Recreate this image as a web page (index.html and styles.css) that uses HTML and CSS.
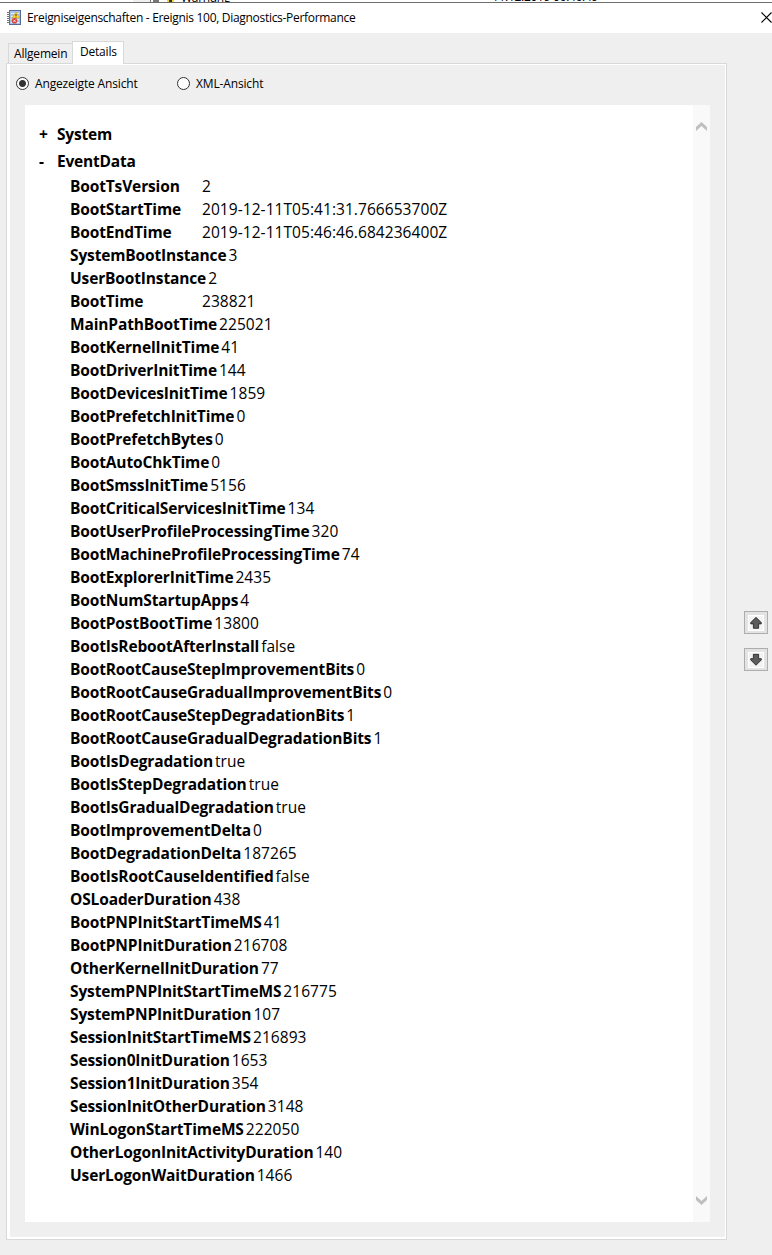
FILE: index.html
```
<!DOCTYPE html>
<html lang="de">
<head>
  <meta charset="UTF-8" />
  <title>Ereigniseigenschaften</title>
  <link rel="stylesheet" href="styles.css">
</head>
<body>

<div class="behind">
  <span class="behind-cell"></span>
  <span class="behind-bar"></span>
  <span class="behind-icon"></span>
  <span class="behind-level">Warnung</span>
  <span class="behind-date">11.12.2019 06:46:49</span>
</div>

<div class="window">
  <header class="titlebar">
    <svg class="app-icon" width="15" height="16" viewBox="0 0 15 16">
      <rect x="2.5" y="0.5" width="11" height="14" fill="#a9c4e6" stroke="#56699b"/>
      <path d="M4 3.5h8M4 6.5h8M4 9.5h8M4 12.5h8" stroke="#e4eefa"/>
      <path d="M0 2.5h3M0 4.5h3M0 6.5h3M0 8.5h3M0 10.5h3M0 12.5h3" stroke="#777"/>
      <path d="M9 2l3.8 6H5.2z" fill="#ffd92e" stroke="#c79a16" stroke-width=".6"/>
      <path d="M9 4v2M9 6.6v.8" stroke="#333"/>
      <circle cx="7.5" cy="10.8" r="2.8" fill="#d4453e"/>
      <path d="M6.4 9.7l2.2 2.2M8.6 9.7l-2.2 2.2" stroke="#fff" stroke-width=".8"/>
    </svg>
    <h1>Ereigniseigenschaften - Ereignis 100, Diagnostics-Performance</h1>
    <svg class="close" width="11" height="11" viewBox="0 0 11 11">
      <path d="M.5 .5l10 10M10.5 .5l-10 10" stroke="#000" stroke-width="1.1"/>
    </svg>
  </header>

  <div class="dialog">
    <main>
      <nav class="tabs">
        <a class="tab">Allgemein</a>
        <a class="tab active">Details</a>
      </nav>
      <section class="panel">
        <div class="views">
          <label class="view"><span class="radio checked"></span>Angezeigte Ansicht</label>
          <label class="view"><span class="radio"></span>XML-Ansicht</label>
        </div>
        <div class="content">
          <div class="tree">
            <h2><span class="sign">+</span>System</h2>
            <h2><span class="sign">-</span>EventData</h2>
            <dl class="data">
              <div><dt>BootTsVersion</dt><dd>2</dd></div>
              <div><dt>BootStartTime</dt><dd>2019-12-11T05:41:31.766653700Z</dd></div>
              <div><dt>BootEndTime</dt><dd>2019-12-11T05:46:46.684236400Z</dd></div>
              <div><dt>SystemBootInstance</dt><dd>3</dd></div>
              <div><dt>UserBootInstance</dt><dd>2</dd></div>
              <div><dt>BootTime</dt><dd>238821</dd></div>
              <div><dt>MainPathBootTime</dt><dd>225021</dd></div>
              <div><dt>BootKernelInitTime</dt><dd>41</dd></div>
              <div><dt>BootDriverInitTime</dt><dd>144</dd></div>
              <div><dt>BootDevicesInitTime</dt><dd>1859</dd></div>
              <div><dt>BootPrefetchInitTime</dt><dd>0</dd></div>
              <div><dt>BootPrefetchBytes</dt><dd>0</dd></div>
              <div><dt>BootAutoChkTime</dt><dd>0</dd></div>
              <div><dt>BootSmssInitTime</dt><dd>5156</dd></div>
              <div><dt>BootCriticalServicesInitTime</dt><dd>134</dd></div>
              <div><dt>BootUserProfileProcessingTime</dt><dd>320</dd></div>
              <div><dt>BootMachineProfileProcessingTime</dt><dd>74</dd></div>
              <div><dt>BootExplorerInitTime</dt><dd>2435</dd></div>
              <div><dt>BootNumStartupApps</dt><dd>4</dd></div>
              <div><dt>BootPostBootTime</dt><dd>13800</dd></div>
              <div><dt>BootIsRebootAfterInstall</dt><dd>false</dd></div>
              <div><dt>BootRootCauseStepImprovementBits</dt><dd>0</dd></div>
              <div><dt>BootRootCauseGradualImprovementBits</dt><dd>0</dd></div>
              <div><dt>BootRootCauseStepDegradationBits</dt><dd>1</dd></div>
              <div><dt>BootRootCauseGradualDegradationBits</dt><dd>1</dd></div>
              <div><dt>BootIsDegradation</dt><dd>true</dd></div>
              <div><dt>BootIsStepDegradation</dt><dd>true</dd></div>
              <div><dt>BootIsGradualDegradation</dt><dd>true</dd></div>
              <div><dt>BootImprovementDelta</dt><dd>0</dd></div>
              <div><dt>BootDegradationDelta</dt><dd>187265</dd></div>
              <div><dt>BootIsRootCauseIdentified</dt><dd>false</dd></div>
              <div><dt>OSLoaderDuration</dt><dd>438</dd></div>
              <div><dt>BootPNPInitStartTimeMS</dt><dd>41</dd></div>
              <div><dt>BootPNPInitDuration</dt><dd>216708</dd></div>
              <div><dt>OtherKernelInitDuration</dt><dd>77</dd></div>
              <div><dt>SystemPNPInitStartTimeMS</dt><dd>216775</dd></div>
              <div><dt>SystemPNPInitDuration</dt><dd>107</dd></div>
              <div><dt>SessionInitStartTimeMS</dt><dd>216893</dd></div>
              <div><dt>Session0InitDuration</dt><dd>1653</dd></div>
              <div><dt>Session1InitDuration</dt><dd>354</dd></div>
              <div><dt>SessionInitOtherDuration</dt><dd>3148</dd></div>
              <div><dt>WinLogonStartTimeMS</dt><dd>222050</dd></div>
              <div><dt>OtherLogonInitActivityDuration</dt><dd>140</dd></div>
              <div><dt>UserLogonWaitDuration</dt><dd>1466</dd></div>
            </dl>
          </div>
          <div class="scrollbar">
            <svg width="11" height="9" viewBox="0 0 11 9"><path d="M0 5L5.5 0 11 5v4L5.5 4 0 9z" fill="#bfbfbf"/></svg>
            <svg width="11" height="9" viewBox="0 0 11 9"><path d="M0 4l5.5 5L11 4V0L5.5 5 0 0z" fill="#bfbfbf"/></svg>
          </div>
        </div>
      </section>
    </main>
    <aside class="arrows">
      <button class="arrow">
        <svg width="16" height="16" viewBox="0 0 16 16"><path d="M8 1.5l6 6V9h-3v5H5V9H2V7.500z" fill="#5c5c5c" stroke="#262626"/></svg>
      </button>
      <button class="arrow">
        <svg width="16" height="16" viewBox="0 0 16 16"><path d="M8 14l6-6V6.500h-3v-5H5v5H2V8z" fill="#5c5c5c" stroke="#262626"/></svg>
      </button>
    </aside>
  </div>
</div>

</body>
</html>
```
FILE: styles.css
```
* {
  box-sizing: border-box;
}
body {
  margin: 0;
  height: 1255px;
  overflow: hidden;
  font-family: "Open Sans", "Noto Sans", sans-serif;
  font-size: 12px;
  letter-spacing: -0.3px;
  color: #000;
  background-color: #efefef;
}
h1, h2, dl, dd {
  margin: 0;
}
.behind {
  display: flex;
  height: 2px;
  overflow: hidden;
  background-color: #fff;
  line-height: 16px;
}
.behind span {
  flex: none;
}
.behind-cell {
  width: 17px;
  margin-left: 133px;
  background-color: #efefef;
}
.behind-bar {
  width: 9px;
  background: linear-gradient(90deg, #777 1px, #fff 1px 3px, #777 3px);
}
.behind-icon {
  width: 7px;
  margin-left: 8px;
  background: linear-gradient(90deg, #f4d92c 2px, #333 2px 5px, #f4d92c 5px);
}
.behind-level {
  width: 313px;
  margin-left: 7px;
  margin-top: -10px;
}
.behind-date {
  margin-top: -11px;
  margin-left: -2px;
  letter-spacing: -0.3px;
}
.window {
  height: 1253px;
  border-top: 1px solid #6e6e6e;
}
.titlebar {
  display: flex;
  align-items: center;
  height: 30px;
  padding: 0 0 2px 7px;
  background-color: #fff;
}
.app-icon {
  margin-top: 2px;
}
.titlebar h1 {
  flex: 1;
  margin-left: 5px;
  font-size: 12px;
  font-weight: 400;
}
.dialog {
  display: flex;
  height: 1222px;
}
main {
  width: 721px;
  margin-left: 6px;
  padding-top: 8px;
}
.tabs {
  display: flex;
  align-items: flex-end;
  height: 23px;
  margin-bottom: -1px;
  padding-left: 2px;
}
.tab {
  width: 64px;
  height: 21px;
  padding-left: 5px;
  border: 1px solid #d9d9d9;
  border-right: none;
  letter-spacing: -0.2px;
  line-height: 20px;
}
.tab.active {
  width: 52px;
  height: 23px;
  padding-left: 7px;
  border-right: 1px solid #d9d9d9;
  border-bottom: none;
  background-color: #fff;
  z-index: 1;
}
.panel {
  height: 1177px;
  border: 1px solid #d9d9d9;
  padding: 1px 1px 2px 3px;
  background-color: #fff;
}
.views {
  display: flex;
  height: 40px;
  padding: 8px 0 0 6px;
  background-color: #efefef;
}
.view {
  display: flex;
  align-items: center;
  width: 161px;
  height: 20px;
  letter-spacing: -0.15px;
}
.radio {
  width: 13px;
  height: 13px;
  margin-right: 6px;
  border: 1px solid #333;
  border-radius: 50%;
  background-color: #fff;
}
.radio.checked {
  background: radial-gradient(circle, #333 3px, #fff 4px);
}
.content {
  display: flex;
  height: 1132px;
  border: solid #efefef;
  border-width: 0 15px 15px;
  background-color: #fff;
}
.tree {
  flex: 1;
  padding: 16px 0 0 14px;
}
.tree h2 {
  display: flex;
  height: 27px;
  font-size: 15.5px;
  font-weight: 700;
  letter-spacing: -0.2px;
  line-height: 27px;
}
.sign {
  width: 18px;
}
.data {
  padding-left: 31px;
  font-size: 15.5px;
  line-height: 23px;
}
.data div {
  display: flex;
  height: 23px;
}
.data dt {
  min-width: 132px;
  padding-right: 2px;
  font-weight: 700;
  letter-spacing: -0.14px;
}
.data dd {
  letter-spacing: 0.06px;
}
.scrollbar {
  display: flex;
  flex-direction: column;
  justify-content: space-between;
  align-items: center;
  width: 17px;
  padding: 17px 0;
  background-color: #f9f9f9;
}
.arrows {
  display: flex;
  flex-direction: column;
  gap: 14px;
  margin-left: 17px;
  padding-top: 578px;
}
.arrow {
  display: flex;
  justify-content: center;
  align-items: center;
  width: 24px;
  height: 23px;
  padding: 0;
  border: 1px solid #adadad;
  background-color: #e3e3e3;
}
.arrow svg {
  background-color: #f3f3f3;
  border: 1px solid #fff;
}
```
